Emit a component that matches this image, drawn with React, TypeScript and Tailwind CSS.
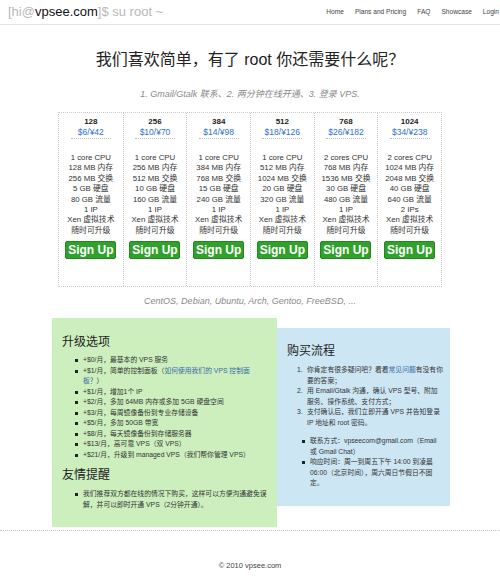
import React from "react";

const plans = [
  { mem: "128", price: "$6/¥42", cpu: "1 core CPU", swap: "256", disk: "5", bw: "80", ip: "1 IP" },
  { mem: "256", price: "$10/¥70", cpu: "1 core CPU", swap: "512", disk: "10", bw: "160", ip: "1 IP" },
  { mem: "384", price: "$14/¥98", cpu: "1 core CPU", swap: "768", disk: "15", bw: "240", ip: "1 IP" },
  { mem: "512", price: "$18/¥126", cpu: "1 core CPU", swap: "1024", disk: "20", bw: "320", ip: "1 IP" },
  { mem: "768", price: "$26/¥182", cpu: "2 cores CPU", swap: "1536", disk: "30", bw: "480", ip: "1 IP" },
  { mem: "1024", price: "$34/¥238", cpu: "2 cores CPU", swap: "2048", disk: "40", bw: "640", ip: "2 IPs" },
];

const font = { fontFamily: '"Liberation Sans", "Noto Sans CJK SC", sans-serif' };

function Bullet({ children }: { children: React.ReactNode }) {
  return (
    <li className="flex items-start">
      <span className="mt-[4px] mr-[5px] h-[3px] w-[3px] shrink-0 bg-[#222]" />
      <span className="whitespace-nowrap">{children}</span>
    </li>
  );
}

function Num({ n, children }: { n: number; children: React.ReactNode }) {
  return (
    <li className="flex items-start">
      <span className="w-[10px] shrink-0">{n}.</span>
      <span className="whitespace-nowrap">{children}</span>
    </li>
  );
}

export default function App() {
  return (
    <div className="min-h-[580px] w-[500px] overflow-hidden bg-white text-[#333]" style={font}>
      {/* header */}
      <div className="flex h-[25px] items-center border-b border-[#e2e6e6] pl-[8px]">
        <div className="text-[13px] text-[#b8b8b8]">
          [hi@<span className="text-[#111]">vpsee.com</span>]$ su root ~
        </div>
        <nav className="ml-auto mr-[1px] flex gap-[11px] text-[6.6px] text-[#444]">
          <span>Home</span>
          <span>Plans and Pricing</span>
          <span>FAQ</span>
          <span>Showcase</span>
          <span>Login</span>
        </nav>
      </div>

      {/* title */}
      <h1 className="mt-[25px] text-center text-[16px] leading-[20px] text-[#222]">
        我们喜欢简单，有了 root 你还需要什么呢？
      </h1>
      <p className="mt-[18px] text-center text-[9px] italic leading-[12px] text-[#8a8a8a]">
        1. Gmail/Gtalk 联系、2. 两分钟在线开通、3. 登录 VPS.
      </p>

      {/* pricing */}
      <div className="mx-auto mt-[12px] grid w-[384px] grid-cols-6 border border-dotted border-[#c8c8c8]">
        {plans.map((p, i) => (
          <div
            key={p.mem}
            className={`flex flex-col items-center pt-[4px] pb-[27px] ${i > 0 ? "border-l border-dotted border-[#c8c8c8]" : ""}`}
          >
            <div className="text-[8px] font-bold leading-[10px] text-[#222]">{p.mem}</div>
            <div className="text-[8.5px] leading-[10px] text-[#2f6fd0]">{p.price}</div>
            <div className="mt-[1px] w-[40px] border-t border-dotted border-[#bbb]" />
            <div className="mt-[14px] text-center text-[7.8px] leading-[10.4px] text-[#333]">
              <div>{p.cpu}</div>
              <div>{p.mem} MB 内存</div>
              <div>{p.swap} MB 交换</div>
              <div>{p.disk} GB 硬盘</div>
              <div>{p.bw} GB 流量</div>
              <div>{p.ip}</div>
              <div>Xen 虚拟技术</div>
              <div>随时可升级</div>
            </div>
            <div className="mt-[5px] flex h-[18px] w-[51px] items-center justify-center rounded-[2px] border border-[#24861f] bg-[#30a22b] text-[12px] font-bold text-white">
              Sign Up
            </div>
          </div>
        ))}
      </div>

      <p className="mt-[8px] text-center text-[9px] italic leading-[12px] text-[#8a8a8a]">
        CentOS, Debian, Ubuntu, Arch, Gentoo, FreeBSD, ...
      </p>

      {/* boxes */}
      <div className="mt-[11px] ml-[52px] flex items-start">
        <div className="w-[225px] bg-[#ccefbd] px-[10px] pt-[16px] pb-[17px]">
          <h2 className="text-[12px] leading-[16px] text-[#222]">升级选项</h2>
          <ul className="mt-[5px] pl-[13px] text-[6.8px] leading-[10.5px] text-[#333]">
            <Bullet>+$0/月，最基本的 VPS 服务</Bullet>
            <Bullet>
              +$1/月，简单的控制面板（<span className="text-[#3b6aa8]">如何使用我们的 VPS 控制面</span>
              <br />
              <span className="text-[#3b6aa8]">板？</span>）
            </Bullet>
            <Bullet>+$1/月，增加1个 IP</Bullet>
            <Bullet>+$2/月，多加 64MB 内存或多加 5GB 硬盘空间</Bullet>
            <Bullet>+$3/月，每周镜像备份到专业存储设备</Bullet>
            <Bullet>+$5/月，多加 50GB 带宽</Bullet>
            <Bullet>+$8/月，每天镜像备份到存储服务器</Bullet>
            <Bullet>+$13/月，高可靠 VPS（双 VPS）</Bullet>
            <Bullet>+$21/月，升级到 managed VPS（我们帮你管理 VPS）</Bullet>
          </ul>
          <h2 className="mt-[7px] text-[12px] leading-[16px] text-[#222]">友情提醒</h2>
          <ul className="mt-[6px] pl-[13px] text-[6.8px] leading-[10.5px] text-[#333]">
            <Bullet>
              我们推荐双方都在线的情况下购买，这样可以方便沟通避免误
              <br />
              解，并可以即时开通 VPS（2分钟开通）。
            </Bullet>
          </ul>
        </div>

        <div className="mt-[10px] w-[173px] bg-[#cde6f3] px-[10px] pt-[15px] pb-[17px]">
          <h2 className="text-[12px] leading-[16px] text-[#222]">购买流程</h2>
          <ol className="mt-[6px] pl-[10px] text-[6.8px] leading-[10.5px] text-[#333]">
            <Num n={1}>
              你肯定有很多疑问吧？看看<span className="text-[#3b6aa8]">常见问题</span>有没有你
              <br />
              要的答案；
            </Num>
            <Num n={2}>
              用 Email/Gtalk 沟通，确认 VPS 型号、附加
              <br />
              服务、操作系统、支付方式；
            </Num>
            <Num n={3}>
              支付确认后，我们立即开通 VPS 并告知登录
              <br />
              IP 地址和 root 密码。
            </Num>
          </ol>
          <ul className="mt-[8px] pl-[15px] text-[6.8px] leading-[10.5px] text-[#333]">
            <Bullet>
              联系方式：vpseecom@gmail.com（Email
              <br />
              或 Gmail Chat）
            </Bullet>
            <Bullet>
              响应时间：周一到周五下午 14:00 到凌晨
              <br />
              06:00（北京时间），周六周日节假日不固
              <br />
              定。
            </Bullet>
          </ul>
        </div>
      </div>

      {/* footer */}
      <div className="mt-[3px] border-t border-dotted border-[#c8c8c8] pt-[30px] pb-[16px] text-center text-[7.5px] leading-[10px] text-[#444]">
        © 2010 vpsee.com
      </div>
    </div>
  );
}
